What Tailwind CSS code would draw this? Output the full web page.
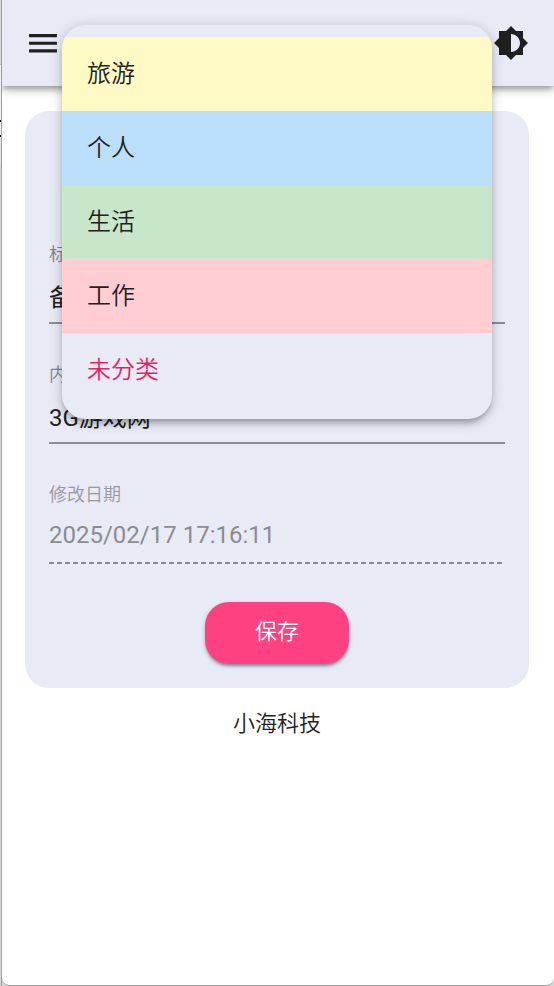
<!DOCTYPE html>
<html lang="zh-CN">
<head>
<meta charset="utf-8">
<meta name="viewport" content="width=device-width, initial-scale=1">
<title>小海科技</title>
<script src="https://cdn.jsdelivr.net/npm/@tailwindcss/browser@4"></script>
</head>
<body class="min-h-screen flex bg-[#d6d6d6] text-[#212121] font-[Roboto,'Noto_Sans_CJK_SC',sans-serif]">
<div class="w-[2px] shrink-0 border-r border-[#a0a0a0] pt-16" aria-hidden="true">
  <div class="h-14 border-t border-[#bbb] bg-[#eee]"></div>
  <div class="h-[2px] bg-black"></div>
  <div class="h-[13px] bg-[#eee]"></div>
  <div class="h-[2px] bg-black"></div>
  <div class="h-[27px] bg-[#e2e2e2]"></div>
</div>
<div class="relative flex-1 min-w-0 flex flex-col bg-white rounded-b-lg border-b border-[#a0a0a0] overflow-hidden">
  <header class="h-[86px] shrink-0 flex items-center justify-between pl-[23px] pr-[25px] bg-[#e8eaf6] shadow-[0_3px_6px_-1px_rgba(0,0,0,0.3),0_5px_8px_rgba(0,0,0,0.18)]">
    <button type="button" aria-label="菜单" class="size-9">
      <svg viewBox="0 0 24 24" class="size-9" fill="#1f1f1f"><path d="M2.700 18.300h18.600v-2.100H2.700zM2.700 13.200h18.600v-2.100H2.700zM2.700 6v2.100h18.600V6z"/></svg>
    </button>
    <button type="button" aria-label="切换主题" class="size-9">
      <svg viewBox="0 0 24 24" class="size-9" fill="#1f1f1f"><path d="M20 15.310L23.310 12 20 8.690V4h-4.690L12 .690 8.690 4H4v4.690L.690 12 4 15.310V20h4.690L12 23.310 15.310 20H20v-4.690zM12 18V6c3.310 0 6 2.690 6 6s-2.690 6-6 6z"/></svg>
    </button>
  </header>
  <main class="pl-[23px] pt-[25px] pr-[25px]">
    <form class="flex flex-col gap-[38px] rounded-[24px] bg-[#e8eaf6] px-6 pb-6 pt-[131px]">
      <div>
        <label for="title" class="block text-lg leading-[26px] text-[#85868e] font-[350]">标题</label>
        <input id="title" value="备" class="mt-2 block h-12 w-full border-b-2 border-[#8b8c94] pb-2 text-2xl outline-none">
      </div>
      <div>
        <label for="content" class="block text-lg leading-[26px] text-[#85868e] font-[350]">内容</label>
        <input id="content" value="3G游戏网" class="mt-2 block h-12 w-full border-b-2 border-[#8b8c94] pb-2 text-2xl outline-none">
      </div>
      <div>
        <label for="date" class="block text-lg leading-[26px] text-[#97989f] font-[350]">修改日期</label>
        <input id="date" value="2025/02/17 17:16:11" disabled class="mt-2 block h-[46px] w-full pb-2 text-2xl text-[#8b8c93]">
        <div class="h-[2px] bg-[repeating-linear-gradient(90deg,#8b8c94_0_5px,transparent_5px_8px)]"></div>
      </div>
      <button type="button" class="h-[62px] w-36 self-center rounded-[24px] bg-[#ff4081] pb-1 text-[22px] font-[350] text-white shadow-[0_3px_3px_-1px_rgba(0,0,0,0.3),0_2px_5px_rgba(0,0,0,0.2)]">保存</button>
    </form>
  </main>
  <footer class="pt-5 pr-[2px] text-center text-[22px] font-[350] leading-8">小海科技</footer>

  <div role="listbox" aria-label="分类" class="absolute left-[60px] right-[62px] top-[25px] flex flex-col overflow-hidden rounded-[24px] bg-[#e8eaf6] py-3 text-2xl font-[350] shadow-[0_6px_7px_-3px_rgba(0,0,0,0.3),0_2px_14px_rgba(0,0,0,0.2)]">
    <button type="button" role="option" aria-selected="false" class="h-[74px] bg-[#fff9c4] px-[25px] text-left">旅游</button>
    <button type="button" role="option" aria-selected="false" class="h-[74px] bg-[#bbdefb] px-[25px] text-left">个人</button>
    <button type="button" role="option" aria-selected="false" class="h-[74px] bg-[#c8e6c9] px-[25px] text-left">生活</button>
    <button type="button" role="option" aria-selected="false" class="h-[74px] bg-[#ffcdd2] px-[25px] text-left">工作</button>
    <button type="button" role="option" aria-selected="true" class="h-[74px] px-[25px] text-left text-[#e91e63]">未分类</button>
  </div>
</div>
</body>
</html>
